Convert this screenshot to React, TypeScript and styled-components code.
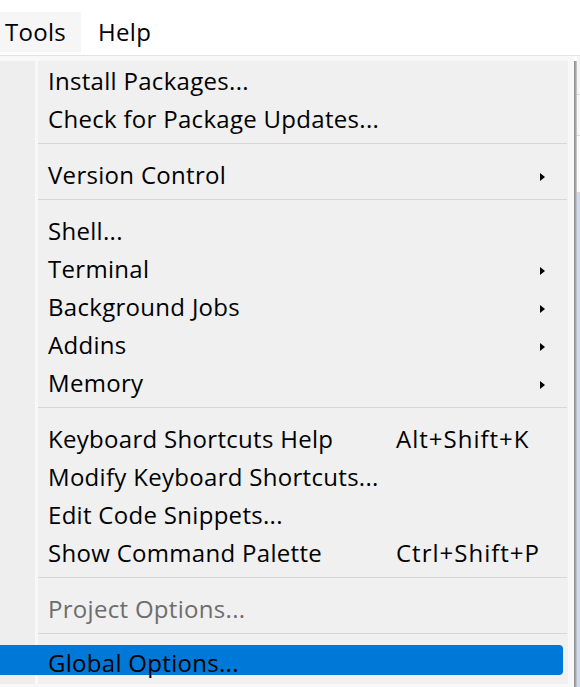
import styled, { createGlobalStyle } from "styled-components";

const GlobalStyle = createGlobalStyle`
  html, body {
    margin: 0;
    padding: 0;
    background: #fff;
  }
  body {
    font-family: "Open Sans", "Noto Sans", sans-serif;
    font-size: 24px;
    letter-spacing: 0.3px;
    color: #000;
  }
`;

const Screen = styled.div`
  width: 580px;
  height: 687px;
  overflow: hidden;
  display: flex;
  flex-direction: column;
`;

const MenuBar = styled.div`
  height: 56px;
  box-sizing: border-box;
  padding-bottom: 3px;
  background: #fff;
  border-bottom: 1px solid #e4e4e4;
  display: flex;
  align-items: flex-end;
  gap: 12px;
`;

const MenuTitle = styled.div<{ open?: boolean }>`
  height: 40px;
  line-height: 40px;
  padding: 0 15px 0 5px;
  background: ${(p) => (p.open ? "#f6f6f6" : "transparent")};
`;

const Stage = styled.div`
  flex: 1;
  display: flex;
  min-height: 0;
`;

const Popup = styled.div`
  width: 568px;
  border-top: 5px solid #f8f8f8;
  border-right: 6px solid #f8f8f8;
  border-bottom: 3px solid #f8f8f8;
  background: linear-gradient(
    to right,
    #eeeeee 0 35px,
    #f8f8f8 35px 38px,
    #f0f0f0 38px
  );
`;

const Shadow = styled.div`
  width: 3px;
  margin-top: 5px;
  background: linear-gradient(to right, #8c8c8c, #a9a9a9 60%, #d4d4d4);
`;

const AppEdge = styled.div`
  flex: 1;
  display: flex;
  flex-direction: column;
  background: #f5f5f5;
`;

const EdgeBand = styled.div<{ tone: string; h: number }>`
  height: ${(p) => p.h}px;
  background: ${(p) => p.tone};
  border-bottom: 1px solid #d8d8d8;
`;

const AppBlue = styled.div`
  flex: 1;
  background: #c9dcf5;
`;

const Item = styled.div<{ active?: boolean; disabled?: boolean }>`
  height: ${(p) => (p.active ? 30 : 38)}px;
  margin: ${(p) => (p.active ? "4px 5px 4px 0" : "0")};
  border-radius: ${(p) => (p.active ? "0 4px 4px 0" : "0")};
  background: ${(p) => (p.active ? "#0078d7" : "transparent")};
  box-sizing: border-box;
  padding-left: 48px;
  padding-top: ${(p) => (p.active ? "3px" : "5px")};
  line-height: 30px;
  display: flex;
  align-items: flex-start;
  white-space: nowrap;
  color: ${(p) => (p.disabled ? "#6d6d6d" : "#000")};
`;

const Label = styled.span`
  width: 348px;
  flex-shrink: 0;
`;

const Shortcut = styled.span`
  letter-spacing: 1px;
`;

const Arrow = styled.span`
  margin: 13px 23px 0 auto;
  width: 0;
  height: 0;
  border-top: 4.5px solid transparent;
  border-bottom: 4.5px solid transparent;
  border-left: 5px solid #000;
`;

const Separator = styled.div`
  height: 1px;
  margin: 6px 1px 11px 38px;
  background: #d7d7d7;
`;

type Entry =
  | { sep: true }
  | {
      sep?: false;
      label: string;
      shortcut?: string;
      sub?: boolean;
      disabled?: boolean;
      active?: boolean;
    };

const entries: Entry[] = [
  { label: "Install Packages..." },
  { label: "Check for Package Updates..." },
  { sep: true },
  { label: "Version Control", sub: true },
  { sep: true },
  { label: "Shell..." },
  { label: "Terminal", sub: true },
  { label: "Background Jobs", sub: true },
  { label: "Addins", sub: true },
  { label: "Memory", sub: true },
  { sep: true },
  { label: "Keyboard Shortcuts Help", shortcut: "Alt+Shift+K" },
  { label: "Modify Keyboard Shortcuts..." },
  { label: "Edit Code Snippets..." },
  { label: "Show Command Palette", shortcut: "Ctrl+Shift+P" },
  { sep: true },
  { label: "Project Options...", disabled: true },
  { sep: true },
  { label: "Global Options...", active: true },
];

export default function App() {
  return (
    <>
      <GlobalStyle />
      <Screen>
        <MenuBar>
          <MenuTitle open>Tools</MenuTitle>
          <MenuTitle>Help</MenuTitle>
        </MenuBar>
        <Stage>
          <Popup>
            {entries.map((e, i) =>
              e.sep ? (
                <Separator key={i} />
              ) : (
                <Item key={i} active={e.active} disabled={e.disabled}>
                  <Label>{e.label}</Label>
                  {e.shortcut && <Shortcut>{e.shortcut}</Shortcut>}
                  {e.sub && <Arrow />}
                </Item>
              )
            )}
          </Popup>
          <Shadow />
          <AppEdge>
            <EdgeBand tone="#f5f5f5" h={38} />
            <EdgeBand tone="#f7f7f7" h={40} />
            <EdgeBand tone="#fafafa" h={56} />
            <AppBlue />
          </AppEdge>
        </Stage>
      </Screen>
    </>
  );
}
